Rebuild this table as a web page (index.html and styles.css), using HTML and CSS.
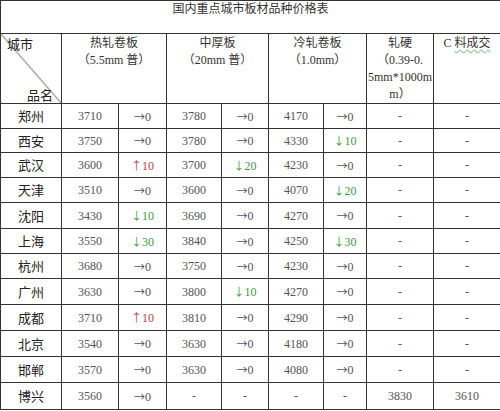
FILE: index.html
```html
<!DOCTYPE html>
<html lang="zh">
<head>
<meta charset="utf-8">
<title>国内重点城市板材品种价格表</title>
<link rel="stylesheet" href="styles.css">
</head>
<body>
<table class="price">
  <colgroup>
    <col class="c0"><col class="c1"><col class="c2"><col class="c3"><col class="c4"><col class="c5"><col class="c6"><col class="c7"><col class="c8">
  </colgroup>
  <thead>
    <tr class="r-title">
      <th colspan="9" class="title">国内重点城市板材品种价格表</th>
    </tr>
    <tr class="r-head">
      <th class="corner">
        <div class="corner-box"><span class="corner-top">城市</span><span class="corner-bot">品名</span></div>
      </th>
      <th colspan="2">热轧卷板<br>（5.5mm 普）</th>
      <th colspan="2">中厚板<br>（20mm 普）</th>
      <th colspan="2">冷轧卷板<br>（1.0mm）</th>
      <th>轧硬<br>（0.39-0.<br>5mm*1000m<br>m）</th>
      <th>C <span class="squiggle">料成交</span></th>
    </tr>
  </thead>
  <tbody>
    <tr class="r25"><td class="city">郑州</td><td>3710</td><td><span class="ar">→</span>0</td><td>3780</td><td><span class="ar">→</span>0</td><td>4170</td><td><span class="ar">→</span>0</td><td>-</td><td>-</td></tr>
    <tr class="r24"><td class="city">西安</td><td>3750</td><td><span class="ar">→</span>0</td><td>3780</td><td><span class="ar">→</span>0</td><td>4330</td><td class="dn"><span class="ar">↓</span>10</td><td>-</td><td>-</td></tr>
    <tr class="r25"><td class="city">武汉</td><td>3600</td><td class="up"><span class="ar">↑</span>10</td><td>3700</td><td class="dn"><span class="ar">↓</span>20</td><td>4230</td><td><span class="ar">→</span>0</td><td>-</td><td>-</td></tr>
    <tr class="r25"><td class="city">天津</td><td>3510</td><td><span class="ar">→</span>0</td><td>3600</td><td><span class="ar">→</span>0</td><td>4070</td><td class="dn"><span class="ar">↓</span>20</td><td>-</td><td>-</td></tr>
    <tr class="r26"><td class="city">沈阳</td><td>3430</td><td class="dn"><span class="ar">↓</span>10</td><td>3690</td><td><span class="ar">→</span>0</td><td>4270</td><td><span class="ar">→</span>0</td><td>-</td><td>-</td></tr>
    <tr class="r25"><td class="city">上海</td><td>3550</td><td class="dn"><span class="ar">↓</span>30</td><td>3840</td><td><span class="ar">→</span>0</td><td>4250</td><td class="dn"><span class="ar">↓</span>30</td><td>-</td><td>-</td></tr>
    <tr class="r25"><td class="city">杭州</td><td>3680</td><td><span class="ar">→</span>0</td><td>3750</td><td><span class="ar">→</span>0</td><td>4230</td><td><span class="ar">→</span>0</td><td>-</td><td>-</td></tr>
    <tr class="r26"><td class="city">广州</td><td>3630</td><td><span class="ar">→</span>0</td><td>3800</td><td class="dn"><span class="ar">↓</span>10</td><td>4270</td><td><span class="ar">→</span>0</td><td>-</td><td>-</td></tr>
    <tr class="r26"><td class="city">成都</td><td>3710</td><td class="up"><span class="ar">↑</span>10</td><td>3810</td><td><span class="ar">→</span>0</td><td>4290</td><td><span class="ar">→</span>0</td><td>-</td><td>-</td></tr>
    <tr class="r26"><td class="city">北京</td><td>3540</td><td><span class="ar">→</span>0</td><td>3630</td><td><span class="ar">→</span>0</td><td>4180</td><td><span class="ar">→</span>0</td><td>-</td><td>-</td></tr>
    <tr class="r26"><td class="city">邯郸</td><td>3570</td><td><span class="ar">→</span>0</td><td>3630</td><td><span class="ar">→</span>0</td><td>4080</td><td><span class="ar">→</span>0</td><td>-</td><td>-</td></tr>
    <tr class="r27"><td class="city">博兴</td><td>3560</td><td><span class="ar">→</span>0</td><td>-</td><td>-</td><td>-</td><td>-</td><td>3830</td><td>3610</td></tr>
  </tbody>
</table>
</body>
</html>
```

FILE: styles.css
```css
html, body {
  margin: 0;
  padding: 0;
  background: #fff;
}

.price {
  border-collapse: collapse;
  table-layout: fixed;
  width: 500px;
  font-family: "Liberation Serif", "Noto Sans CJK SC", serif;
  font-size: 12px;
  color: #555;
}

.c0 { width: 61px; }
.c1 { width: 57px; }
.c2 { width: 48px; }
.c3 { width: 55px; }
.c4 { width: 47px; }
.c5 { width: 55px; }
.c6 { width: 43px; }
.c7 { width: 67px; }
.c8 { width: 67px; }

.price th,
.price td {
  border: 1px solid #333;
  padding: 0;
  text-align: center;
}

.price th {
  font-family: "Liberation Serif", "Noto Sans CJK SC", serif;
  font-weight: normal;
  font-size: 12px;
  color: #333;
  vertical-align: top;
  line-height: 17px;
}

.r-title { height: 33px; }
.title {
  padding-top: 3px;
  line-height: 16px;
  color: #333;
}

.r-head { height: 70px; }
.r-head th { padding-top: 1px; }

.corner {
  background: linear-gradient(to top right, transparent calc(50% - 0.7px), #444 50%, transparent calc(50% + 0.7px));
}
.corner-box {
  height: 68px;
  display: flex;
  flex-direction: column;
  justify-content: space-between;
  font-family: "Noto Sans CJK SC", sans-serif;
  font-size: 13px;
  color: #222;
}
.corner-top { align-self: flex-start; padding-left: 6px; }
.corner-bot { align-self: flex-end; padding-right: 8px; }

.squiggle {
  text-decoration: underline wavy #9c9;
  text-underline-offset: 2px;
}

.r24 { height: 24px; }
.r25 { height: 25px; }
.r26 { height: 26px; }
.r27 { height: 27px; }

.price td {
  vertical-align: middle;
  line-height: 16px;
}

.city {
  font-family: "Noto Sans CJK SC", sans-serif;
  font-size: 13px;
  color: #222;
}

.ar {
  font-family: "Noto Sans CJK SC", sans-serif;
  font-size: 11px;
}

.up { color: #c83a48; }
.dn { color: #3f9a3f; }
```
